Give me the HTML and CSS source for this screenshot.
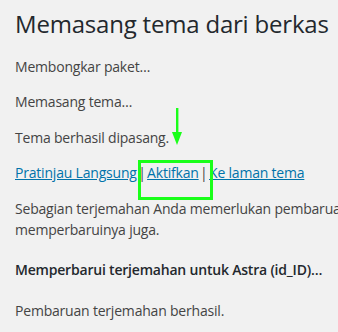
FILE: index.html
```html
<!DOCTYPE html>
<html lang="id">
<head>
<meta charset="UTF-8">
<title>Memasang tema dari berkas</title>
<link rel="stylesheet" href="styles.css">
</head>
<body>
  <div class="wrap">
    <h1>Memasang tema dari berkas</h1>
    <p>Membongkar paket…</p>
    <p>Memasang tema…</p>
    <p class="done">Tema berhasil dipasang.
      <svg class="arrow" width="12" height="38" viewBox="0 0 12 38">
        <rect x="5" y="0" width="2.4" height="26" fill="#1aff1a"/>
        <polygon points="1,24 11,24 6,37" fill="#1aff1a"/>
      </svg>
    </p>
    <p class="actions">
      <a href="#">Pratinjau Langsung</a> |
      <span class="mark"><a href="#">Aktifkan</a></span> |
      <a href="#">Ke laman tema</a>
    </p>
    <p class="notice">Sebagian terjemahan Anda memerlukan pembaruan. Mohon tunggu sebentar selagi kami<br>memperbaruinya juga.</p>
    <h4>Memperbarui terjemahan untuk Astra (id_ID)…</h4>
    <p>Pembaruan terjemahan berhasil.</p>
  </div>
</body>
</html>
```

FILE: styles.css
```css
body {
  margin: 0;
  background-color: #f1f1f1;
  color: #444;
  font-family: "Open Sans", "Noto Sans", sans-serif;
  font-size: 14px;
  line-height: 1.45;
  letter-spacing: -0.2px;
  overflow: hidden;
}
.wrap {
  padding: 0 0 0 15px;
  width: 700px;
}
h1 {
  margin: 0;
  padding: 8px 0 3px;
  font-size: 24px;
  font-weight: 400;
  line-height: 1.3;
  color: #23282d;
  white-space: nowrap;
}
p {
  margin: 15px 0;
}
.notice {
  white-space: nowrap;
  line-height: 1.5;
}
.done {
  position: relative;
}
.arrow {
  position: absolute;
  left: 156px;
  top: -20px;
}
a {
  color: #0073aa;
}
.mark {
  position: relative;
}
.mark::after {
  content: "";
  position: absolute;
  left: -9px;
  right: -14px;
  top: -3px;
  bottom: -18px;
  border: 3px solid #1aff1a;
}
.actions {
  white-space: nowrap;
  word-spacing: -2px;
}
.actions a {
  word-spacing: normal;
}
h4 {
  margin: 20px 0;
  font-size: 14px;
  font-weight: 600;
  color: #23282d;
}
```
